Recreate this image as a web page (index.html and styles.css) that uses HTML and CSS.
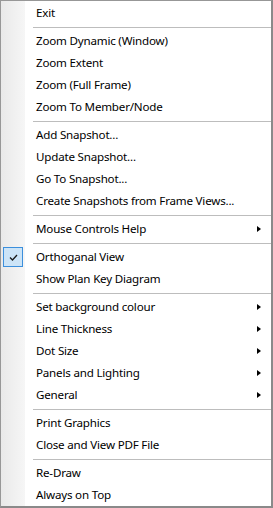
FILE: index.html
```html
<!DOCTYPE html>
<html lang="en">
<head>
    <meta charset="UTF-8">
    <title>Graphics Menu</title>
    <link rel="stylesheet" href="styles.css">
</head>
<body>
<div class="menu">
    <div class="item"><span class="icon"></span><span class="label">Exit</span></div>
    <div class="sep"></div>
    <div class="item"><span class="icon"></span><span class="label">Zoom Dynamic (Window)</span></div>
    <div class="item"><span class="icon"></span><span class="label">Zoom Extent</span></div>
    <div class="item"><span class="icon"></span><span class="label">Zoom (Full Frame)</span></div>
    <div class="item"><span class="icon"></span><span class="label">Zoom To Member/Node</span></div>
    <div class="sep"></div>
    <div class="item"><span class="icon"></span><span class="label">Add Snapshot...</span></div>
    <div class="item"><span class="icon"></span><span class="label">Update Snapshot...</span></div>
    <div class="item"><span class="icon"></span><span class="label">Go To Snapshot...</span></div>
    <div class="item"><span class="icon"></span><span class="label">Create Snapshots from Frame Views...</span></div>
    <div class="sep"></div>
    <div class="item"><span class="icon"></span><span class="label">Mouse Controls Help</span><span class="arrow"></span></div>
    <div class="sep"></div>
    <div class="item">
        <span class="icon">
            <span class="check">
                <svg width="9" height="7" viewBox="0 0 9 7"><polyline points="1,3.5 3.5,6 8,1" fill="none" stroke="#1a1a1a" stroke-width="1.3"/></svg>
            </span>
        </span>
        <span class="label">Orthoganal View</span>
    </div>
    <div class="item"><span class="icon"></span><span class="label">Show Plan Key Diagram</span></div>
    <div class="sep"></div>
    <div class="item"><span class="icon"></span><span class="label">Set background colour</span><span class="arrow"></span></div>
    <div class="item"><span class="icon"></span><span class="label">Line Thickness</span><span class="arrow"></span></div>
    <div class="item"><span class="icon"></span><span class="label">Dot Size</span><span class="arrow"></span></div>
    <div class="item"><span class="icon"></span><span class="label">Panels and Lighting</span><span class="arrow"></span></div>
    <div class="item"><span class="icon"></span><span class="label">General</span><span class="arrow"></span></div>
    <div class="sep"></div>
    <div class="item"><span class="icon"></span><span class="label">Print Graphics</span></div>
    <div class="item"><span class="icon"></span><span class="label">Close and View PDF File</span></div>
    <div class="sep"></div>
    <div class="item"><span class="icon"></span><span class="label">Re-Draw</span></div>
    <div class="item"><span class="icon"></span><span class="label">Always on Top</span></div>
</div>
</body>
</html>
```

FILE: styles.css
```css
body {
    margin: 0;
    background: #fff;
}
.menu {
    box-sizing: border-box;
    width: 273px;
    height: 508px;
    padding-top: 1px;
    border: 1px solid #979797;
    border-right: 2px solid #8a8a8a;
    border-bottom: 2px solid #8a8a8a;
    background: linear-gradient(to right, #e9e9e9, #f6f6f6) 0 0 / 24px 100% no-repeat, #fff;
    font-family: "Noto Sans", "Open Sans", sans-serif;
    font-size: 11.6px;
    letter-spacing: -0.2px;
    color: #000;
}
.item {
    display: flex;
    align-items: center;
    height: 22px;
}
.icon {
    display: flex;
    align-items: center;
    width: 24px;
    height: 22px;
    flex: none;
}
.check {
    display: flex;
    align-items: center;
    justify-content: center;
    box-sizing: border-box;
    width: 20px;
    height: 20px;
    margin-left: 2px;
    background: #cce4f7;
    border: 1px solid #3c8fdc;
}
.label {
    margin-left: 11px;
    margin-top: -1px;
    white-space: nowrap;
}
.arrow {
    margin-left: auto;
    margin-right: 10px;
    width: 0;
    height: 0;
    border-top: 3.5px solid transparent;
    border-bottom: 3.5px solid transparent;
    border-left: 4px solid #000;
}
.sep {
    height: 1px;
    margin: 3px 0 2px 32px;
    background: #bdbdbd;
}
```
